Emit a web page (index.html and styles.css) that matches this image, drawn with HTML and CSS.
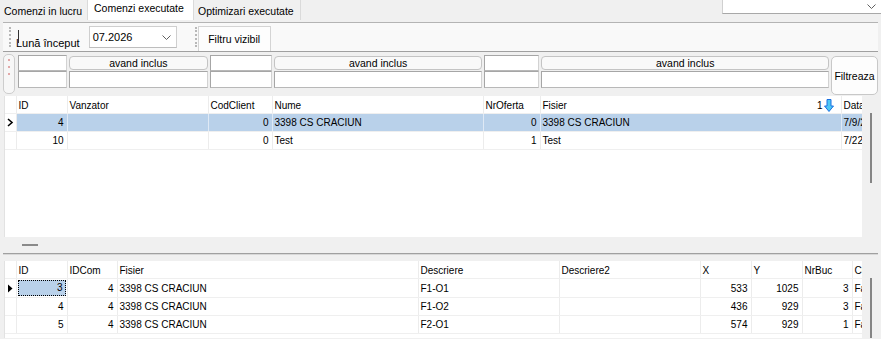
FILE: index.html
```html
<!DOCTYPE html>
<html lang="ro">
<head>
  <meta charset="UTF-8" />
  <title>Comenzi executate</title>
  <link rel="stylesheet" href="styles.css">
</head>
<body>

  <div class="tabs">
    <div class="tab t1">Comenzi in lucru</div>
    <div class="tab t2 active">Comenzi executate</div>
    <div class="tab t3">Optimizari executate</div>
    <div class="tab-combo">
      <svg width="9" height="5" viewBox="0 0 9 5"><polyline points="0.5,0.5 4.5,4.5 8.5,0.5" fill="none" stroke="#606060" stroke-width="1"/></svg>
    </div>
  </div>

  <div class="toolbar">
    <span class="grip"></span>
    <span class="label"><i class="caret"></i>Lună început</span>
    <div class="combo">
      <span>07.2026</span>
      <svg width="9" height="5" viewBox="0 0 9 5"><polyline points="0.5,0.5 4.5,4.5 8.5,0.5" fill="none" stroke="#606060" stroke-width="1"/></svg>
    </div>
    <span class="grip second"></span>
    <button class="tool-btn">Filtru vizibil</button>
  </div>

  <div class="filters">
    <div class="filter-grip"><i></i><i></i><i></i></div>
    <div class="fcell" style="width:49px"><div class="box"></div><div class="box tall"></div></div>
    <div class="fcell" style="width:139px"><button class="inc">avand inclus</button><div class="box tall"></div></div>
    <div class="fcell" style="width:62px"><div class="box"></div><div class="box tall"></div></div>
    <div class="fcell" style="width:209px"><button class="inc">avand inclus</button><div class="box tall"></div></div>
    <div class="fcell" style="width:55px"><div class="box"></div><div class="box tall"></div></div>
    <div class="fcell" style="width:288px"><button class="inc">avand inclus</button><div class="box tall"></div></div>
    <button class="filter-go">Filtreaza</button>
  </div>

  <div class="grid-wrap top">
    <div class="grid">
      <table class="g1">
        <colgroup>
          <col style="width:11px"><col style="width:51px"><col style="width:141px"><col style="width:64px">
          <col style="width:211px"><col style="width:57px"><col style="width:301px"><col style="width:60px">
        </colgroup>
        <tr>
          <th class="ind"></th><th>ID</th><th>Vanzator</th><th>CodClient</th><th>Nume</th><th>NrOferta</th>
          <th>Fisier<span class="sort">1<svg width="10" height="13" viewBox="0 0 10 13"><path d="M3 0.5h4v6.5h2.5l-4.5 5.5-4.5-5.5h2.5z" fill="#4cc8f4" stroke="#1b6fe0" stroke-width="1"/></svg></span></th>
          <th>Data</th>
        </tr>
        <tr class="sel">
          <td class="ind"><svg width="7" height="9" viewBox="0 0 7 9"><polyline points="1,1 5,4.5 1,8" fill="none" stroke="#000" stroke-width="1.6"/></svg></td>
          <td class="num">4</td><td></td><td class="num">0</td><td>3398 CS CRACIUN</td><td class="num">0</td><td>3398 CS CRACIUN</td><td>7/9/2026</td>
        </tr>
        <tr>
          <td class="ind"></td>
          <td class="num">10</td><td></td><td class="num">0</td><td>Test</td><td class="num">1</td><td>Test</td><td>7/22/2026</td>
        </tr>
      </table>
    </div>
    <div class="vscroll"><i style="height:70px"></i></div>
  </div>

  <div class="splitter"><i></i></div>

  <div class="grid-wrap bottom">
    <div class="grid">
      <table class="g2">
        <colgroup>
          <col style="width:11px"><col style="width:51px"><col style="width:50px"><col style="width:301px">
          <col style="width:141px"><col style="width:141px"><col style="width:51px"><col style="width:51px">
          <col style="width:50px"><col style="width:60px">
        </colgroup>
        <tr>
          <th class="ind"></th><th>ID</th><th>IDCom</th><th>Fisier</th><th>Descriere</th><th>Descriere2</th>
          <th>X</th><th>Y</th><th>NrBuc</th><th>Culoare</th>
        </tr>
        <tr>
          <td class="ind"><svg width="6" height="9" viewBox="0 0 6 9"><polygon points="1,0.5 5.5,4.5 1,8.5" fill="#000"/></svg></td>
          <td class="num focus"><span>3</span></td><td class="num">4</td><td>3398 CS CRACIUN</td><td>F1-O1</td><td></td>
          <td class="num">533</td><td class="num">1025</td><td class="num">3</td><td>Fara</td>
        </tr>
        <tr>
          <td class="ind"></td>
          <td class="num">4</td><td class="num">4</td><td>3398 CS CRACIUN</td><td>F1-O2</td><td></td>
          <td class="num">436</td><td class="num">929</td><td class="num">3</td><td>Fara</td>
        </tr>
        <tr>
          <td class="ind"></td>
          <td class="num">5</td><td class="num">4</td><td>3398 CS CRACIUN</td><td>F2-O1</td><td></td>
          <td class="num">574</td><td class="num">929</td><td class="num">1</td><td>Fara</td>
        </tr>
      </table>
    </div>
    <div class="vscroll"><i style="height:60px"></i></div>
  </div>

</body>
</html>
```

FILE: styles.css
```css
body {
  margin: 0;
  width: 881px;
  height: 339px;
  overflow: hidden;
  background: #f0f0f0;
  font-family: "Liberation Sans", Arial, sans-serif;
  font-size: 10.5px;
  color: #000;
}

/* tabs */
.tabs {
  display: flex;
  align-items: flex-start;
  height: 22px;
}

.tab {
  box-sizing: border-box;
  height: 20px;
  padding: 5px 0 0 4px;
  border-right: 1px solid #dadada;
  white-space: nowrap;
}

.t1 { width: 88px; }
.t2 { width: 106px; }
.t3 { width: 107px; }

.tab.active {
  background: #fff;
  padding-top: 2px;
  padding-left: 6px;
}

.tab-combo {
  margin-left: auto;
  box-sizing: border-box;
  width: 159px;
  height: 14px;
  background: #fff;
  border-left: 1px solid #d0d0d0;
  border-bottom: 1px solid #a8a8a8;
  display: flex;
  justify-content: flex-end;
  align-items: center;
  padding-right: 5px;
}

/* toolbar */
.toolbar {
  margin: 0 3px;
  height: 28px;
  border-top: 1px solid #b4b4b4;
  border-bottom: 1px solid #a0a0a0;
  background: #f9f9f9;
  display: flex;
  align-items: center;
}

.grip {
  width: 0;
  height: 20px;
  margin-left: 6px;
  border-left: 2px dotted #b8b8b8;
}

.grip.second {
  margin-left: 18px;
}

.label {
  align-self: flex-end;
  margin: 0 0 2px 5px;
  position: relative;
  font-size: 11px;
}

.caret {
  position: absolute;
  left: 2px;
  top: -7px;
  width: 1px;
  height: 13px;
  background: #333;
}

.combo {
  margin-left: 9px;
  box-sizing: border-box;
  width: 88px;
  height: 22px;
  background: #fff;
  border: 1px solid #cfcfcf;
  border-bottom-color: #bdbdbd;
  display: flex;
  align-items: center;
  justify-content: space-between;
  padding: 0 5px 0 3px;
  font-size: 11px;
}

.tool-btn {
  align-self: flex-end;
  margin: 0 0 0 1px;
  box-sizing: border-box;
  width: 73px;
  height: 25px;
  background: #fdfdfd;
  border: 1px solid #d4d4d4;
  border-bottom: none;
  font-family: inherit;
  font-size: 10.5px;
  padding: 0;
}

/* filter row */
.filters {
  margin: 1px 3px 0 3px;
  height: 42px;
  display: flex;
  gap: 2px;
  align-items: flex-start;
}

.filter-grip {
  box-sizing: border-box;
  width: 12px;
  height: 40px;
  margin: 1px 1px 0 0;
  border: 1px solid #cdcdcd;
  border-radius: 5px;
  background: #f7f7f7;
  display: flex;
  flex-direction: column;
  align-items: center;
  padding-top: 4px;
  gap: 5px;
}

.filter-grip i {
  width: 2px;
  height: 2px;
  background: #e2a8a8;
}

.fcell {
  display: flex;
  flex-direction: column;
  padding-top: 2px;
}

.box {
  box-sizing: border-box;
  height: 16px;
  background: #fff;
  border: 1px solid #a6a6a6;
  border-right-color: #d2d2d2;
  border-bottom-color: #b8b8b8;
}

.box.tall {
  height: 17px;
}

.inc {
  box-sizing: border-box;
  height: 14px;
  margin: 1px 0;
  background: #f9f9f9;
  border: 1px solid #c4c4c4;
  border-radius: 4px;
  font-family: inherit;
  font-size: 10.5px;
  line-height: 11px;
  padding: 0;
}

.filter-go {
  box-sizing: border-box;
  width: 47px;
  height: 39px;
  margin-top: 3px;
  background: #fdfdfd;
  border: 1px solid #c8c8c8;
  border-radius: 5px;
  font-family: inherit;
  font-size: 10.5px;
  padding: 0;
}

/* grids */
.grid-wrap {
  display: flex;
  margin: 0 3px 0 4px;
}

.grid-wrap.top {
  margin-top: 1px;
  height: 141px;
}

.grid-wrap.bottom {
  margin-top: 7px;
  height: 77px;
}

.grid {
  flex: 1;
  overflow: hidden;
  background: #fff;
  border-left: 1px solid #e2e2e2;
}

.grid table {
  table-layout: fixed;
  border-collapse: collapse;
  font-size: 10px;
}

table.g1 { width: 896px; }
table.g2 { width: 907px; }

th, td {
  height: 17px;
  padding: 0 2px;
  border-right: 1px solid #ececec;
  border-bottom: 1px solid #efefef;
  white-space: nowrap;
  overflow: hidden;
  text-align: left;
  font-weight: normal;
}

th {
  padding-top: 2px;
  height: 15px;
}

td.num { text-align: right; padding-right: 3px; }

td.ind, th.ind {
  padding: 0;
  text-align: center;
}

td.ind svg { display: block; margin: 0 auto; }

.sort {
  float: right;
  display: flex;
  align-items: center;
  gap: 1px;
  margin-right: 5px;
  margin-top: -1px;
}

tr.sel td:not(.ind) {
  background: #b9d1ea;
  border-right-color: #dfe9f5;
}

td.focus {
  padding: 0;
}

td.focus span {
  display: block;
  margin: 1px;
  padding-right: 2px;
  height: 14px;
  line-height: 14px;
  background: #b9d1ea;
  border: 1px dotted #000;
}

.vscroll {
  width: 16px;
  background: #f0f0f0;
  display: flex;
  justify-content: center;
}

.vscroll i {
  width: 2px;
  margin-top: 17px;
  margin-left: 2px;
  background: #858585;
}

.splitter {
  margin: 0 3px;
  height: 16px;
  border-bottom: 1px solid #a0a0a0;
  box-shadow: 0 1px 0 #d8d8d8;
  display: flex;
  align-items: center;
}

.splitter i {
  width: 16px;
  height: 2px;
  margin-left: 19px;
  background: #8a8a8a;
}
```
